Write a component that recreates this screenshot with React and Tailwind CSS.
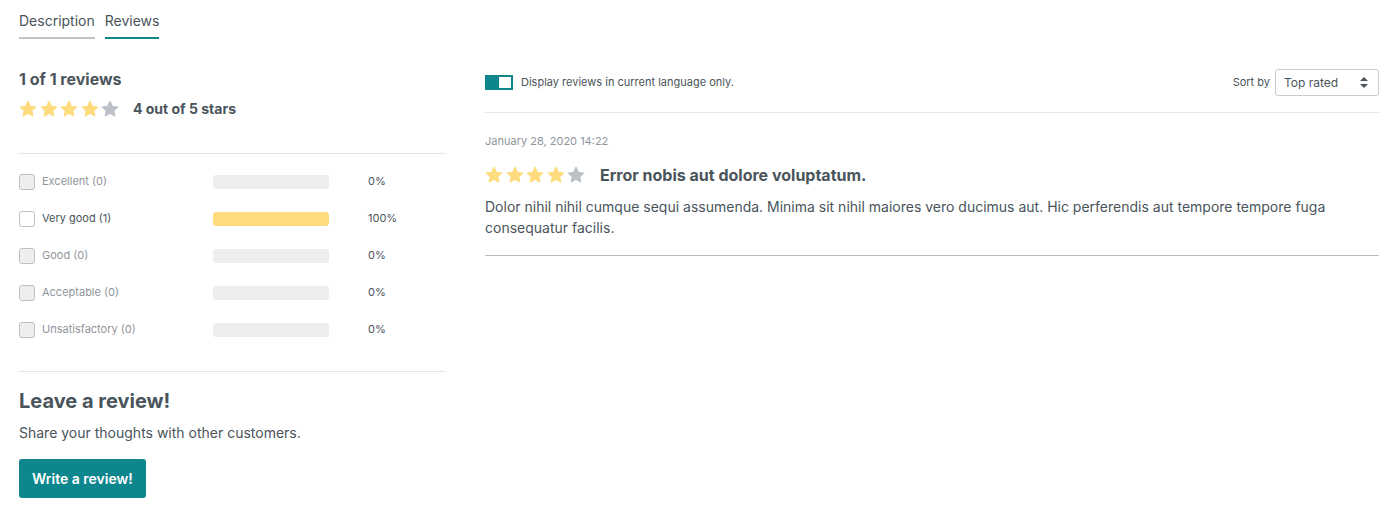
import React, { useState } from 'react';

const Star = ({ filled }) => (
  <svg width="18" height="18" viewBox="0 0 24 24" className="shrink-0">
    <path
      d="M12 1.8l3.1 6.6 7.1.9-5.2 4.9 1.4 7.1L12 17.8l-6.4 3.5 1.4-7.1-5.2-4.9 7.1-.9z"
      fill={filled ? '#fedb7d' : '#bcc1c7'}
      stroke={filled ? '#fedb7d' : '#bcc1c7'}
      strokeWidth="1.5"
      strokeLinejoin="round"
    />
  </svg>
);

const Stars = ({ value }) => (
  <div className="flex gap-[2.5px]">
    {[1, 2, 3, 4, 5].map((i) => (
      <Star key={i} filled={i <= value} />
    ))}
  </div>
);

const ratings = [
  { label: 'Excellent', count: 0, pct: 0 },
  { label: 'Very good', count: 1, pct: 100 },
  { label: 'Good', count: 0, pct: 0 },
  { label: 'Acceptable', count: 0, pct: 0 },
  { label: 'Unsatisfactory', count: 0, pct: 0 },
];

const App = () => {
  const [tab, setTab] = useState('reviews');
  const [langOnly, setLangOnly] = useState(true);

  return (
    <div className="min-h-screen bg-white pl-[19px] pr-[16px] text-[#4a545b]" style={{ fontFamily: 'Inter, "Noto Sans", sans-serif' }}>
      {/* TABS */}
      <div className="flex gap-[10px] pt-[11px]">
        <button
          onClick={() => setTab('description')}
          className={`border-b-2 pb-[7px] text-[14px] leading-[19px] ${tab === 'description' ? 'border-[#0e868e]' : 'border-[#c0c3c7]'}`}
        >
          Description
        </button>
        <button
          onClick={() => setTab('reviews')}
          className={`border-b-2 pb-[7px] text-[14px] leading-[19px] ${tab === 'reviews' ? 'border-[#0e868e]' : 'border-[#c0c3c7]'}`}
        >
          Reviews
        </button>
      </div>

      <div className="flex gap-[40px] pt-[29px]">
        {/* LEFT COLUMN */}
        <div className="w-[426px] shrink-0">
          <h3 className="text-[16px] font-bold leading-[22px]">1 of 1 reviews</h3>
          <div className="mt-[8px] flex items-center gap-[14px]">
            <Stars value={4} />
            <span className="text-[14px] font-bold">4 out of 5 stars</span>
          </div>

          <div className="mt-[34px] border-t border-[#e5e5e5] pt-[9px]">
            {ratings.map((r) => (
              <div key={r.label} className="flex h-[37px] items-center">
                <label className="flex w-[194px] items-center gap-[7px]">
                  <span
                    className={`h-[16px] w-[16px] rounded-[3px] border border-[#bcc1c7] ${r.count ? 'bg-white' : 'bg-[#eeeeee]'}`}
                  />
                  <span className={`text-[11px] ${r.count ? 'text-[#4a545b]' : 'text-[#8f959b]'}`}>
                    {r.label} ({r.count})
                  </span>
                </label>
                <div className="h-[14px] w-[116px] overflow-hidden rounded-[3px] bg-[#eeeeee]">
                  <div className="h-full rounded-[3px] bg-[#fedb7d]" style={{ width: `${r.pct}%` }} />
                </div>
                <span className="ml-[39px] text-[11px]">{r.pct}%</span>
              </div>
            ))}
          </div>

          <div className="mt-[23px] border-t border-[#e5e5e5] pt-[16px]">
            <h2 className="text-[20px] font-bold leading-[27px]">Leave a review!</h2>
            <p className="mt-[8px] text-[14px] leading-[20px]">Share your thoughts with other customers.</p>
            <button className="mt-[16px] h-[39px] rounded-[3px] bg-[#0e868e] px-[13px] text-[14px] font-semibold text-white">
              Write a review!
            </button>
          </div>
        </div>

        {/* RIGHT COLUMN */}
        <div className="min-w-0 flex-1">
          <div className="flex items-center justify-between border-b border-[#e5e5e5] pb-[16px] pt-[1px]">
            <label className="flex items-center gap-[8px]" onClick={() => setLangOnly(!langOnly)}>
              <span className={`flex h-[15px] w-[28px] items-center p-[2px] ${langOnly ? 'justify-end bg-[#0e868e]' : 'justify-start bg-[#bcc1c7]'}`}>
                <span className="h-[11px] w-[12px] bg-white" />
              </span>
              <span className="text-[11px]">Display reviews in current language only.</span>
            </label>
            <div className="flex items-center gap-[5px]">
              <span className="text-[11px]">Sort by</span>
              <div className="flex h-[27px] w-[104px] items-center justify-between rounded-[3px] border border-[#cccccc] pl-[8px] pr-[10px]">
                <span className="text-[12px]">Top rated</span>
                <svg width="8" height="11" viewBox="0 0 8 11">
                  <path d="M4 0L8 4H0z M4 11L0 7h8z" fill="#4a545b" />
                </svg>
              </div>
            </div>
          </div>

          <div className="border-b border-[#bcbcc0] pb-[17px] pt-[21px]">
            <div className="text-[11px] leading-[15px] text-[#8f959b]">January 28, 2020 14:22</div>
            <div className="mt-[14px] flex items-center gap-[15px]">
              <Stars value={4} />
              <h4 className="text-[16px] font-bold">Error nobis aut dolore voluptatum.</h4>
            </div>
            <p className="mt-[9px] text-[14px] leading-[21px]">
              Dolor nihil nihil cumque sequi assumenda. Minima sit nihil maiores vero ducimus aut. Hic perferendis aut tempore tempore fuga consequatur facilis.
            </p>
          </div>
        </div>
      </div>
    </div>
  );
};

export default App;
